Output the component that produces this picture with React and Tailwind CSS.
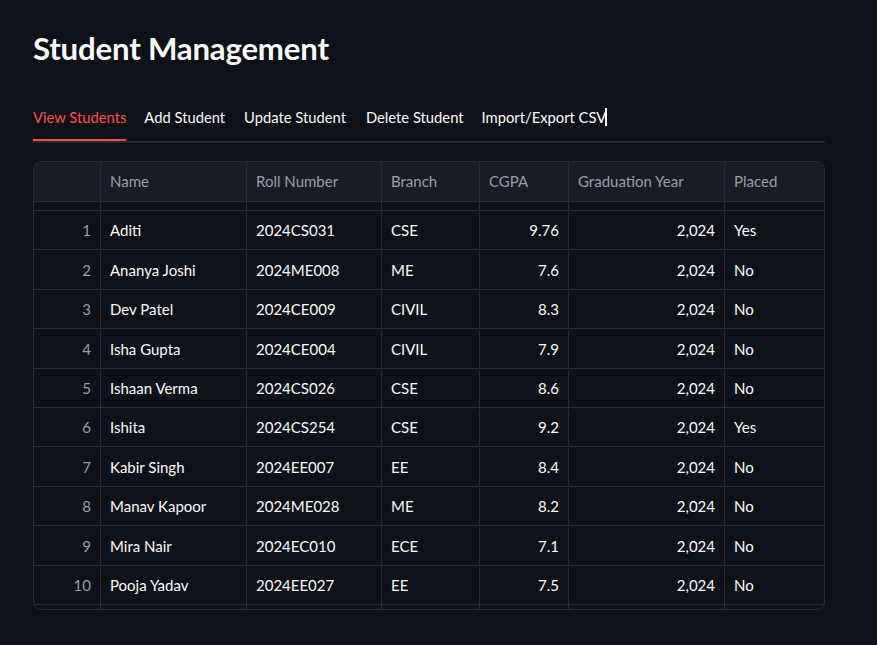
import React from "react";

const rows = [
  ["1", "Aditi", "2024CS031", "CSE", "9.76", "2,024", "Yes"],
  ["2", "Ananya Joshi", "2024ME008", "ME", "7.6", "2,024", "No"],
  ["3", "Dev Patel", "2024CE009", "CIVIL", "8.3", "2,024", "No"],
  ["4", "Isha Gupta", "2024CE004", "CIVIL", "7.9", "2,024", "No"],
  ["5", "Ishaan Verma", "2024CS026", "CSE", "8.6", "2,024", "No"],
  ["6", "Ishita", "2024CS254", "CSE", "9.2", "2,024", "Yes"],
  ["7", "Kabir Singh", "2024EE007", "EE", "8.4", "2,024", "No"],
  ["8", "Manav Kapoor", "2024ME028", "ME", "8.2", "2,024", "No"],
  ["9", "Mira Nair", "2024EC010", "ECE", "7.1", "2,024", "No"],
  ["10", "Pooja Yadav", "2024EE027", "EE", "7.5", "2,024", "No"],
];

const cols = "grid grid-cols-[67px_146px_135px_98px_89px_156px_100px]";

function Cell({ children, align = "left", muted = false, last = false }) {
  return (
    <div
      className={`flex items-center px-[9px] ${last ? "" : "border-r border-[#2a2c35]"} ${
        align === "right" ? "justify-end" : "justify-start"
      } ${muted ? "text-[#9a9ca6]" : "text-[#fafafa]"}`}
    >
      {children}
    </div>
  );
}

export default function App() {
  return (
    <div
      className="min-h-[645px] w-[877px] bg-[#0e1117] text-[#fafafa]"
      style={{ fontFamily: "Lato, 'Open Sans', sans-serif" }}
    >
      <div className="px-[33px] pt-[28px] w-[825px] box-content">
        <h1 className="text-[31.2px] font-bold leading-[40px] tracking-[-0.2px] text-[#fafafa]">
          Student Management
        </h1>
        <div className="mt-[33px] flex border-b-2 border-[#262730] w-[792px] text-[14.75px]">
          <div className="relative -mb-[2px] flex h-[40px] items-start border-b-2 border-[#ff4b4b] text-[#ff4b4b]">
            <span className="pt-[5px]">View Students</span>
          </div>
          <div className="ml-[18px] flex h-[40px] items-start">
            <span className="pt-[5px]">Add Student</span>
          </div>
          <div className="ml-[19px] flex h-[40px] items-start">
            <span className="pt-[5px]">Update Student</span>
          </div>
          <div className="ml-[20px] flex h-[40px] items-start">
            <span className="pt-[5px]">Delete Student</span>
          </div>
          <div className="ml-[18px] flex h-[40px] items-start">
            <span className="pt-[5px]">Import/Export CSV</span>
            <span className="mt-[7px] -ml-[1px] h-[18px] w-[2px] bg-white" />
          </div>
        </div>

        <div className="mt-[18px] w-[792px] overflow-hidden rounded-lg border border-[#2a2c35] text-[15px]">
          <div className={`${cols} h-[40px] bg-[#1a1c24] border-b border-[#2a2c35]`}>
            <Cell muted> </Cell>
            <Cell muted>Name</Cell>
            <Cell muted>Roll Number</Cell>
            <Cell muted>Branch</Cell>
            <Cell muted>CGPA</Cell>
            <Cell muted>Graduation Year</Cell>
            <Cell muted last>Placed</Cell>
          </div>
          <div className={`${cols} h-[9px] border-b border-[#2a2c35]`}>
            <Cell />
            <Cell />
            <Cell />
            <Cell />
            <Cell />
            <Cell />
            <Cell last />
          </div>
          {rows.map((r) => (
            <div key={r[0]} className={`${cols} h-[39.4px] border-b border-[#2a2c35] pt-[1px]`}>
              <Cell align="right" muted>{r[0]}</Cell>
              <Cell>{r[1]}</Cell>
              <Cell>{r[2]}</Cell>
              <Cell>{r[3]}</Cell>
              <Cell align="right">{r[4]}</Cell>
              <Cell align="right">{r[5]}</Cell>
              <Cell last>{r[6]}</Cell>
            </div>
          ))}
          <div className={`${cols} h-[4px]`}>
            <Cell />
            <Cell />
            <Cell />
            <Cell />
            <Cell />
            <Cell />
            <Cell last />
          </div>
        </div>
      </div>
    </div>
  );
}
